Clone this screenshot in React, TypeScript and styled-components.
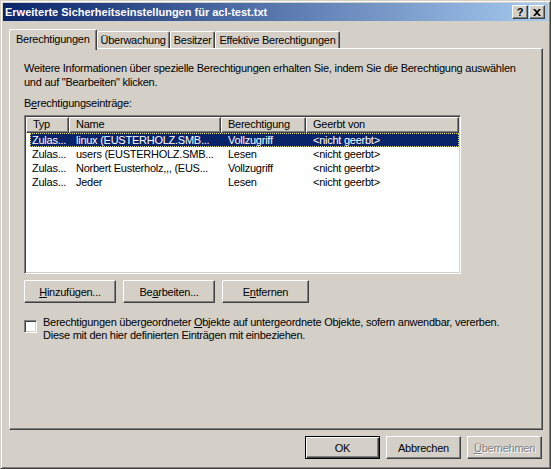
import React from 'react';
import styled, { createGlobalStyle, css } from 'styled-components';

const face = '#d4d0c8';
const shadow = '#808080';
const dark = '#404040';
const navy = '#0a246a';
const font = `'Liberation Sans', Arial, sans-serif`;
const tight = '-0.25px';

const GlobalStyle = createGlobalStyle`
  html, body {
    margin: 0;
    padding: 0;
    background: ${face};
  }
  body {
    font-family: ${font};
    font-size: 11px;
    letter-spacing: ${tight};
    color: #000;
  }
`;

const Window = styled.div`
  box-sizing: border-box;
  width: 551px;
  height: 469px;
  background: ${face};
  border: 1px solid;
  border-color: ${face} ${dark} ${dark} ${face};
  box-shadow: inset 1px 1px 0 #fff, inset -1px -1px 0 ${shadow};
  padding: 2px;
  display: flex;
  flex-direction: column;
`;

const TitleBar = styled.div`
  height: 18px;
  display: flex;
  align-items: center;
  padding: 0 3px 0 2px;
  background: linear-gradient(to right, ${navy}, #a6caf0);
  color: #fff;
  font: bold 11px ${font};
  letter-spacing: 0;
`;

const Title = styled.span`
  flex: 1;
  white-space: nowrap;
`;

const CaptionButtons = styled.div`
  display: flex;
  gap: 1px;
`;

const CaptionButton = styled.div`
  box-sizing: border-box;
  width: 16px;
  height: 14px;
  display: flex;
  align-items: center;
  justify-content: center;
  background: ${face};
  border: 1px solid;
  border-color: #fff ${dark} ${dark} #fff;
  box-shadow: inset -1px -1px 0 ${shadow};
  color: #000;
  font: bold 11px ${font};
  line-height: 1;
`;

const Body = styled.div`
  flex: 1;
  display: flex;
  flex-direction: column;
  padding: 8px 5px 0 6px;
`;

const TabStrip = styled.div`
  display: flex;
  align-items: flex-end;
  height: 19px;
`;

const Tab = styled.div<{ $active?: boolean }>`
  box-sizing: border-box;
  height: 17px;
  padding: 2px 3px 0 3px;
  background: ${face};
  border-top: 1px solid #fff;
  border-left: 1px solid #fff;
  border-right: 1px solid ${dark};
  box-shadow: inset -1px 0 0 ${shadow};
  border-top-left-radius: 2px;
  border-top-right-radius: 2px;
  white-space: nowrap;
  ${(p) =>
    p.$active &&
    css`
      position: relative;
      z-index: 2;
      height: 21px;
      margin-bottom: -2px;
      padding: 3px 6px 0 6px;
    `}
`;

const Panel = styled.div`
  box-sizing: border-box;
  width: 534px;
  height: 382px;
  position: relative;
  z-index: 1;
  border: 1px solid;
  border-color: #fff ${dark} ${dark} #fff;
  box-shadow: inset -1px -1px 0 ${shadow};
  padding: 12px 14px 0 14px;
  display: flex;
  flex-direction: column;
  align-items: flex-start;
`;

const Paragraph = styled.div`
  line-height: 14px;
  white-space: nowrap;
`;

const Label = styled.div`
  margin-top: 8px;
  line-height: 13px;
`;

const Key = styled.span`
  text-decoration: underline;
`;

const ListBox = styled.div`
  box-sizing: border-box;
  margin-top: 5px;
  width: 437px;
  height: 159px;
  background: #fff;
  border: 1px solid;
  border-color: ${shadow} #fff #fff ${shadow};
  box-shadow: inset 1px 1px 0 ${dark}, inset -1px -1px 0 ${face};
  padding: 1px;
`;

const HeaderRow = styled.div`
  display: grid;
  grid-template-columns: 43px 152px 85px 1fr;
  height: 16px;
`;

const HeaderCell = styled.div`
  box-sizing: border-box;
  background: ${face};
  border: 1px solid;
  border-color: #fff ${dark} ${dark} #fff;
  box-shadow: inset -1px -1px 0 ${shadow};
  padding-left: 6px;
  line-height: 13px;
  white-space: nowrap;
  overflow: hidden;
`;

const Row = styled.div<{ $selected?: boolean }>`
  display: grid;
  grid-template-columns: 39px 152px 85px 1fr;
  height: 14px;
  margin-left: 4px;
  line-height: 14px;
  ${(p) =>
    p.$selected &&
    css`
      background: ${navy};
      color: #fff;
      outline: 1px dotted #e8e070;
      outline-offset: -1px;
    `}
`;

const Cell = styled.div<{ $first?: boolean }>`
  padding-left: ${(p) => (p.$first ? 2 : 7)}px;
  white-space: nowrap;
  overflow: hidden;
`;

const ButtonRow = styled.div<{ $end?: boolean }>`
  display: flex;
  gap: ${(p) => (p.$end ? 6 : 7)}px;
  ${(p) =>
    p.$end &&
    css`
      justify-content: flex-end;
      margin-top: 6px;
      padding-right: 1px;
    `}
`;

const Button = styled.button<{ $w: number; $default?: boolean; $disabled?: boolean }>`
  box-sizing: border-box;
  width: ${(p) => p.$w}px;
  height: 23px;
  margin: 0;
  padding: 0;
  background: ${face};
  font: 11px ${font};
  letter-spacing: ${tight};
  color: #000;
  border: 1px solid;
  border-color: #fff ${dark} ${dark} #fff;
  box-shadow: inset -1px -1px 0 ${shadow};
  ${(p) =>
    p.$default &&
    css`
      border-color: #000;
      box-shadow: inset 1px 1px 0 #fff, inset -1px -1px 0 ${dark}, inset -2px -2px 0 ${shadow};
    `}
  ${(p) =>
    p.$disabled &&
    css`
      color: ${shadow};
      text-shadow: 1px 1px 0 #fff;
    `}
`;

const PanelButtons = styled(ButtonRow)`
  margin-top: 6px;
`;

const CheckRow = styled.label`
  display: flex;
  gap: 6px;
  margin-top: 13px;
  line-height: 13px;
  white-space: nowrap;
`;

const CheckBox = styled.span`
  box-sizing: border-box;
  flex: none;
  width: 13px;
  height: 13px;
  margin-top: 4px;
  background: #fff;
  border: 1px solid;
  border-color: ${shadow} #fff #fff ${shadow};
  box-shadow: inset 1px 1px 0 ${dark}, inset -1px -1px 0 ${face};
`;

const rows = [
  ['Zulas...', 'linux (EUSTERHOLZ.SMB...', 'Vollzugriff', '<nicht geerbt>'],
  ['Zulas...', 'users (EUSTERHOLZ.SMB...', 'Lesen', '<nicht geerbt>'],
  ['Zulas...', 'Norbert Eusterholz,,, (EUS...', 'Vollzugriff', '<nicht geerbt>'],
  ['Zulas...', 'Jeder', 'Lesen', '<nicht geerbt>'],
];

export default function App() {
  return (
    <>
      <GlobalStyle />
      <Window>
        <TitleBar>
          <Title>Erweiterte Sicherheitseinstellungen für acl-test.txt</Title>
          <CaptionButtons>
            <CaptionButton>?</CaptionButton>
            <CaptionButton>
              <svg width="8" height="7" viewBox="0 0 8 7">
                <path d="M0 0h2l2 2 2-2h2L5 3.5 8 7H6L4 5 2 7H0l3-3.5z" fill="#000" />
              </svg>
            </CaptionButton>
          </CaptionButtons>
        </TitleBar>
        <Body>
          <TabStrip>
            <Tab $active>Berechtigungen</Tab>
            <Tab>Überwachung</Tab>
            <Tab>Besitzer</Tab>
            <Tab>Effektive Berechtigungen</Tab>
          </TabStrip>
          <Panel>
            <Paragraph>
              Weitere Informationen über spezielle Berechtigungen erhalten Sie, indem Sie die Berechtigung auswählen
              <br />
              und auf "Bearbeiten" klicken.
            </Paragraph>
            <Label>
              B<Key>e</Key>rechtigungseinträge:
            </Label>
            <ListBox>
              <HeaderRow>
                <HeaderCell>Typ</HeaderCell>
                <HeaderCell>Name</HeaderCell>
                <HeaderCell>Berechtigung</HeaderCell>
                <HeaderCell>Geerbt von</HeaderCell>
              </HeaderRow>
              {rows.map((r, i) => (
                <Row key={i} $selected={i === 0}>
                  <Cell $first>{r[0]}</Cell>
                  <Cell>{r[1]}</Cell>
                  <Cell>{r[2]}</Cell>
                  <Cell>{r[3]}</Cell>
                </Row>
              ))}
            </ListBox>
            <PanelButtons>
              <Button $w={92}>
                <Key>H</Key>inzufügen...
              </Button>
              <Button $w={92}>
                Be<Key>a</Key>rbeiten...
              </Button>
              <Button $w={87}>
                E<Key>n</Key>tfernen
              </Button>
            </PanelButtons>
            <CheckRow>
              <CheckBox />
              <span>
                Berechtigungen übergeordneter <Key>O</Key>bjekte auf untergeordnete Objekte, sofern anwendbar, vererben.
                <br />
                Diese mit den hier definierten Einträgen mit einbeziehen.
              </span>
            </CheckRow>
          </Panel>
          <ButtonRow $end>
            <Button $w={75} $default>
              OK
            </Button>
            <Button $w={75}>Abbrechen</Button>
            <Button $w={75} $disabled>
              <Key>Ü</Key>bernehmen
            </Button>
          </ButtonRow>
        </Body>
      </Window>
    </>
  );
}
